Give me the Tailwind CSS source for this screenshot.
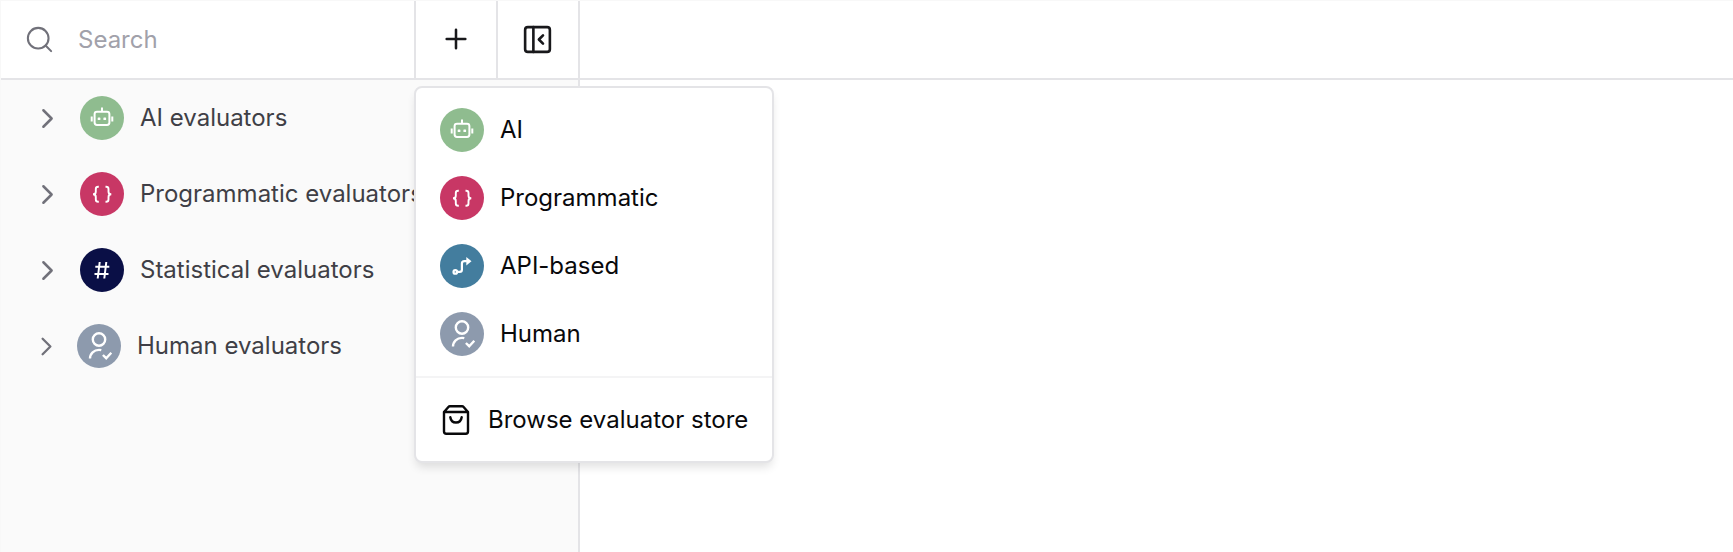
<!DOCTYPE html>
<html lang="en">
<head>
<meta charset="utf-8">
<title>Evaluators</title>
<script src="https://cdn.jsdelivr.net/npm/@tailwindcss/browser@4"></script>
</head>
<body class="h-[552px] w-[1733px] overflow-hidden bg-white font-['Inter',sans-serif] text-[24px] leading-8">
<svg class="hidden">
  <symbol id="robot" viewBox="0 0 44 44"><g fill="none" stroke="#fff" stroke-width="2"><rect x="14.6" y="15.7" width="14.8" height="13.3" rx="2.4"/><path d="M22 11.6v4M11.700 20.600v5M32.300 20.600v5"/></g><g fill="#fff"><rect x="17.700" y="21.400" width="2.700" height="2.700" rx=".6"/><rect x="23.400" y="21.400" width="2.700" height="2.700" rx=".6"/></g></symbol>
  <symbol id="braces" viewBox="0 0 44 44"><path fill="none" stroke="#fff" stroke-width="1.900" d="M18.800 14.800h-.6q-2.400 0-2.400 2.300v2.600q0 2.600-2.800 2.600 2.800 0 2.800 2.600v2.600q0 2.300 2.400 2.300h.6M25.500 14.800h.6q2.400 0 2.400 2.300v2.600q0 2.600 2.800 2.600-2.800 0-2.800 2.600v2.600q0 2.300-2.400 2.300h-.6"/></symbol>
  <symbol id="hash" viewBox="0 0 44 44"><path fill="none" stroke="#fff" stroke-width="2" d="M15.300 18.800h14M14.500 26h14M19.700 14l-2 16.500M26.300 14l-2 16.500"/></symbol>
  <symbol id="human" viewBox="0 0 44 44"><g fill="none" stroke="#fff" stroke-width="2.400"><circle cx="22" cy="15.500" r="6.200"/><path d="M13 34.600c0-5.300 4-8.700 9-8.700q1.200 0 2.300.3M25.900 31l3.300 3.200 5.100-5.400"/></g></symbol>
  <symbol id="route" viewBox="0 0 44 44"><g fill="none" stroke="#fff" stroke-width="2.200"><circle cx="15.300" cy="27.900" r="1.800"/><path d="M17.100 27.900h2.600q2.200 0 2.200-2.200v-6q0-2.500 2.500-2.500h2.500"/></g><path d="M26.300 12.900l5.200 4.300-5.200 4.300z" fill="#fff"/></symbol>
  <symbol id="chevron" viewBox="0 0 24 24"><path fill="none" stroke="#71717a" stroke-width="1.800" stroke-linecap="round" stroke-linejoin="round" d="m9 18 6-6-6-6"/></symbol>
</svg>
<div class="relative flex h-full flex-col border-t border-l border-[#f8f8f8]">
  <header class="flex h-[79px] shrink-0 border-b-2 border-[#e4e4e7]">
    <label class="flex w-[413px] items-center pl-[23px]">
      <svg class="mb-px size-[31px]" viewBox="0 0 24 24" fill="none" stroke="#71717a" stroke-width="1.600" stroke-linecap="round"><circle cx="11" cy="11" r="8"/><path d="m21 21-4.300-4.300"/></svg>
      <span class="ml-[23px] text-[#a1a1aa]">Search</span>
    </label>
    <button class="flex w-[82px] items-center justify-center border-l-2 border-[#e4e4e7] pb-px">
      <svg class="size-8" viewBox="0 0 24 24" fill="none" stroke="#18181b" stroke-width="1.900" stroke-linecap="round"><path d="M5 12h14M12 5v14"/></svg>
    </button>
    <button class="flex w-[84px] items-center justify-center border-x-2 border-[#e4e4e7] pr-px pb-px">
      <svg class="size-[33px]" viewBox="0 0 24 24" fill="none" stroke="#18181b" stroke-width="1.900" stroke-linecap="round" stroke-linejoin="round"><rect x="3" y="3" width="18" height="18" rx="2"/><path d="M9 3v18M16 15l-3-3 3-3"/></svg>
    </button>
  </header>
  <nav class="w-[579px] grow border-r-2 border-[#e4e4e7] bg-[#fafafa] text-[#3f3f46]">
    <div class="flex h-19 items-center pl-[30px]"><svg class="size-[33px]"><use href="#chevron"/></svg><svg class="ml-4 size-11 rounded-full bg-[#8fbc8f]"><use href="#robot"/></svg><span class="ml-4">AI evaluators</span></div>
    <div class="flex h-19 items-center pl-[30px]"><svg class="size-[33px]"><use href="#chevron"/></svg><svg class="ml-4 size-11 rounded-full bg-[#c83765]"><use href="#braces"/></svg><span class="ml-4">Programmatic evaluators</span></div>
    <div class="flex h-19 items-center pl-[30px]"><svg class="size-[33px]"><use href="#chevron"/></svg><svg class="ml-4 size-11 rounded-full bg-[#0a0f46]"><use href="#hash"/></svg><span class="ml-4">Statistical evaluators</span></div>
    <div class="flex h-19 items-center pl-[30px]"><svg class="size-[31px]"><use href="#chevron"/></svg><svg class="ml-[15px] size-11 rounded-full bg-[#8d9aad]"><use href="#human"/></svg><span class="ml-4">Human evaluators</span></div>
  </nav>
  <div class="absolute top-[85px] left-[413px] h-[377px] w-[360px] rounded-lg border-2 border-[#e4e4e7] bg-white pt-2 text-[#09090b] shadow-[0_6px_10px_-2px_rgba(0,0,0,0.12)]">
    <div class="flex h-[68px] items-center pl-6"><svg class="size-11 rounded-full bg-[#8fbc8f]"><use href="#robot"/></svg><span class="ml-4">AI</span></div>
    <div class="flex h-[68px] items-center pl-6"><svg class="size-11 rounded-full bg-[#c83765]"><use href="#braces"/></svg><span class="ml-4">Programmatic</span></div>
    <div class="flex h-[68px] items-center pl-6"><svg class="size-11 rounded-full bg-[#437d9e]"><use href="#route"/></svg><span class="ml-4">API-based</span></div>
    <div class="flex h-[68px] items-center pl-6"><svg class="size-11 rounded-full bg-[#8d9aad]"><use href="#human"/></svg><span class="ml-4">Human</span></div>
    <div class="mt-2 h-0.5 bg-[#f4f4f5]"></div>
    <div class="flex h-[83px] items-center pl-[25px]">
      <svg class="h-8 w-[30px]" viewBox="0 0 30 32" fill="none" stroke="#09090b" stroke-width="2.400" stroke-linecap="round" stroke-linejoin="round"><path d="M3 8 7.400 3q.6-.7 1.500-.7h12.200q.9 0 1.500.7L27 8v19.500q0 2.200-2.200 2.200H5.200Q3 29.700 3 27.500ZM3 8h24M9.300 13.200q.8 5.300 5.700 5.300t5.700-5.300"/></svg>
      <span class="ml-[17px]">Browse evaluator store</span>
    </div>
  </div>
</div>
</body>
</html>
